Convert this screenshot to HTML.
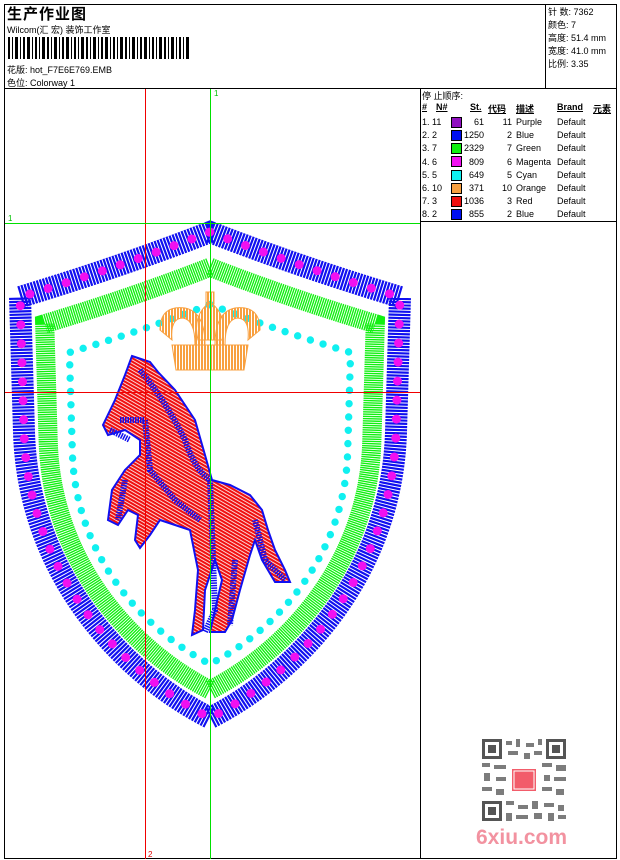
<!DOCTYPE html>
<html><head><meta charset="utf-8"><style>
*{margin:0;padding:0}
body{width:620px;height:860px;background:#fff;position:relative;overflow:hidden;font-family:"Liberation Sans","Noto Sans CJK SC",sans-serif;font-size:9px;color:#000}
.a{position:absolute;white-space:nowrap}
.ln{position:absolute;background:#000}
</style></head><body>
<div class="ln" style="left:4px;top:4px;width:613px;height:1px"></div>
<div class="ln" style="left:4px;top:4px;width:1px;height:855px"></div>
<div class="ln" style="left:616px;top:4px;width:1px;height:855px"></div>
<div class="ln" style="left:4px;top:858px;width:613px;height:1px"></div>
<div class="ln" style="left:4px;top:88px;width:613px;height:1px"></div>
<div class="ln" style="left:545px;top:4px;width:1px;height:84px"></div>
<div class="ln" style="left:420px;top:88px;width:1px;height:771px"></div>
<div class="ln" style="left:420px;top:221px;width:197px;height:1px"></div>

<div class="a" style="left:7px;top:3px;font-size:15px;font-weight:bold;letter-spacing:1px">生产作业图</div>
<div class="a" style="left:7px;top:23px">Wilcom(汇 宏) 装饰工作室</div>
<svg class="a" style="left:8px;top:37px" width="184" height="22">
<g fill="#000">
<rect x="0" y="0" width="2" height="22"/><rect x="4" y="0" width="1" height="22"/><rect x="7" y="0" width="3" height="22"/><rect x="12" y="0" width="1" height="22"/><rect x="15" y="0" width="2" height="22"/><rect x="19" y="0" width="3" height="22"/><rect x="24" y="0" width="1" height="22"/><rect x="27" y="0" width="2" height="22"/><rect x="31" y="0" width="1" height="22"/><rect x="34" y="0" width="3" height="22"/><rect x="39" y="0" width="2" height="22"/><rect x="43" y="0" width="1" height="22"/><rect x="46" y="0" width="3" height="22"/><rect x="51" y="0" width="1" height="22"/><rect x="54" y="0" width="2" height="22"/><rect x="58" y="0" width="3" height="22"/><rect x="63" y="0" width="1" height="22"/><rect x="66" y="0" width="2" height="22"/><rect x="70" y="0" width="1" height="22"/><rect x="73" y="0" width="3" height="22"/><rect x="78" y="0" width="2" height="22"/><rect x="82" y="0" width="1" height="22"/><rect x="85" y="0" width="3" height="22"/><rect x="90" y="0" width="1" height="22"/><rect x="93" y="0" width="2" height="22"/><rect x="97" y="0" width="3" height="22"/><rect x="102" y="0" width="1" height="22"/><rect x="105" y="0" width="2" height="22"/><rect x="109" y="0" width="1" height="22"/><rect x="112" y="0" width="3" height="22"/><rect x="117" y="0" width="2" height="22"/><rect x="121" y="0" width="1" height="22"/><rect x="124" y="0" width="3" height="22"/><rect x="129" y="0" width="1" height="22"/><rect x="132" y="0" width="2" height="22"/><rect x="136" y="0" width="3" height="22"/><rect x="141" y="0" width="1" height="22"/><rect x="144" y="0" width="2" height="22"/><rect x="148" y="0" width="1" height="22"/><rect x="151" y="0" width="3" height="22"/><rect x="156" y="0" width="2" height="22"/><rect x="160" y="0" width="1" height="22"/><rect x="163" y="0" width="3" height="22"/><rect x="168" y="0" width="1" height="22"/><rect x="171" y="0" width="2" height="22"/><rect x="175" y="0" width="1" height="22"/><rect x="178" y="0" width="3" height="22"/>
</g></svg>
<div class="a" style="left:7px;top:63px">花版: hot_F7E6E769.EMB</div>
<div class="a" style="left:7px;top:76px">色位: Colorway 1</div>

<div class="a" style="left:548px;top:6px;line-height:13px">针 数: 7362<br>颜色: 7<br>高度: 51.4 mm<br>宽度: 41.0 mm<br>比例: 3.35</div>

<div class="a" style="left:422px;top:89px">停 止顺序:</div>
<div class="a" style="left:422px;top:102px;font-weight:bold;text-decoration:underline">#</div>
<div class="a" style="left:436px;top:102px;font-weight:bold;text-decoration:underline">N#</div>
<div class="a" style="left:470px;top:102px;font-weight:bold;text-decoration:underline">St.</div>
<div class="a" style="left:488px;top:102px;font-weight:bold;text-decoration:underline">代码</div>
<div class="a" style="left:516px;top:102px;font-weight:bold;text-decoration:underline">描述</div>
<div class="a" style="left:557px;top:102px;font-weight:bold;text-decoration:underline">Brand</div>
<div class="a" style="left:593px;top:102px;font-weight:bold;text-decoration:underline">元素</div>
<div class="a" style="left:422px;top:116px;line-height:13.2px">1. 11<br>2. 2<br>3. 7<br>4. 6<br>5. 5<br>6. 10<br>7. 3<br>8. 2</div>
<div class="a" style="left:451px;top:116px">
<div style="width:9px;height:9px;background:#9010c0;border:1px solid #000;margin:1px 0 2px"></div>
<div style="width:9px;height:9px;background:#0010f0;border:1px solid #000;margin:0 0 2.2px"></div>
<div style="width:9px;height:9px;background:#10f010;border:1px solid #000;margin:0 0 2.2px"></div>
<div style="width:9px;height:9px;background:#f010f0;border:1px solid #000;margin:0 0 2.2px"></div>
<div style="width:9px;height:9px;background:#10f0f0;border:1px solid #000;margin:0 0 2.2px"></div>
<div style="width:9px;height:9px;background:#f8a040;border:1px solid #000;margin:0 0 2.2px"></div>
<div style="width:9px;height:9px;background:#f01010;border:1px solid #000;margin:0 0 2.2px"></div>
<div style="width:9px;height:9px;background:#0010f0;border:1px solid #000"></div>
</div>
<div class="a" style="left:462px;top:116px;width:22px;text-align:right;line-height:13.2px">61<br>1250<br>2329<br>809<br>649<br>371<br>1036<br>855</div>
<div class="a" style="left:496px;top:116px;width:16px;text-align:right;line-height:13.2px">11<br>2<br>7<br>6<br>5<br>10<br>3<br>2</div>
<div class="a" style="left:516px;top:116px;line-height:13.2px">Purple<br>Blue<br>Green<br>Magenta<br>Cyan<br>Orange<br>Red<br>Blue</div>
<div class="a" style="left:557px;top:116px;line-height:13.2px">Default<br>Default<br>Default<br>Default<br>Default<br>Default<br>Default<br>Default</div>

<svg class="a" style="left:0;top:0" width="420" height="860">
<defs>
<path id="sh" d="M0,-240 Q90,-205 190,-175 L186,-40 C182,100 90,200 0,246 C-90,200 -182,100 -186,-40 L-190,-175 Q-90,-205 0,-240 Z"/>
<pattern id="hr" width="3" height="3" patternUnits="userSpaceOnUse" patternTransform="rotate(30)"><rect width="3" height="2.2" fill="#f01010"/></pattern>
<pattern id="ho" width="3" height="3" patternUnits="userSpaceOnUse"><rect width="2" height="3" fill="#f8a040"/></pattern>
</defs>
<g transform="translate(210,472)">
<use href="#sh" fill="none" stroke="#1010f0" stroke-width="22" stroke-dasharray="2.2 1"/>
<use href="#sh" fill="none" stroke="#f010f0" stroke-width="9" stroke-linecap="round" stroke-dasharray="0 19"/>
<g transform="translate(0,4) scale(0.87)"><use href="#sh" fill="none" stroke="#10f010" stroke-width="22" stroke-dasharray="1.6 1"/></g>
<g transform="translate(0,10) scale(0.74)"><use href="#sh" fill="none" stroke="#10f0f0" stroke-width="10" stroke-linecap="round" stroke-dasharray="0 18"/></g>
</g>
<!-- crown -->
<g fill="url(#ho)" stroke="#f8a040" stroke-width="1">
<path d="M160,330 Q160,305 185,308 Q205,312 205,345 L195,345 Q195,320 183,318 Q170,318 172,340 Z"/>
<path d="M260,330 Q260,305 235,308 Q215,312 215,345 L225,345 Q225,320 237,318 Q250,318 248,340 Z"/>
<path d="M198,340 Q192,315 210,302 Q228,315 222,340 Z"/>
<path d="M172,345 L248,345 L244,370 L176,370 Z"/>
<rect x="206" y="292" width="8" height="12"/>
</g>
<!-- horse -->
<polygon points="132,356 150,362 158,372 175,390 195,420 205,455 212,480 230,485 250,495 262,510 268,530 275,550 285,570 290,582 275,582 262,560 255,540 250,555 240,590 232,620 225,632 210,632 215,610 222,580 215,560 205,590 203,630 192,635 195,610 198,570 190,530 175,525 160,520 150,535 140,548 135,540 138,515 128,510 118,525 108,520 112,490 125,470 140,455 140,440 125,430 108,435 103,425 115,400 125,375" fill="url(#hr)" stroke="#1010f0" stroke-width="2"/>
<g fill="none" stroke="#1010f0" stroke-width="6" stroke-dasharray="1.5 1">
<path d="M140,370 Q165,400 185,440 Q195,470 210,480"/>
<path d="M120,420 L145,420 L150,470 L175,500 L200,520"/>
<path d="M210,480 L215,610 L205,632"/>
<path d="M255,520 L265,560 L285,580"/>
<path d="M125,480 L118,520"/>
<path d="M235,560 L230,625"/>
<path d="M110,430 L130,440"/>
</g>
<!-- guide lines -->
<rect x="145" y="89" width="1" height="770" fill="#f00000"/>
<rect x="210" y="89" width="1" height="770" fill="#00e000"/>
<rect x="5" y="223" width="415" height="1" fill="#00e000"/>
<rect x="5" y="392" width="415" height="1" fill="#f00000"/>
<text x="214" y="96" font-size="8" fill="#00c000" font-family="Liberation Sans">1</text>
<text x="8" y="221" font-size="8" fill="#00c000" font-family="Liberation Sans">1</text>
<text x="148" y="857" font-size="8" fill="#e00000" font-family="Liberation Sans">2</text>
</svg>

<!-- QR -->
<svg class="a" style="left:482px;top:739px" width="84" height="82">
<g fill="#555">
<rect x="0" y="0" width="20" height="20"/><rect x="64" y="0" width="20" height="20"/><rect x="0" y="62" width="20" height="20"/>
</g>
<g fill="#fff"><rect x="3" y="3" width="14" height="14"/><rect x="67" y="3" width="14" height="14"/><rect x="3" y="65" width="14" height="14"/></g>
<g fill="#555"><rect x="6" y="6" width="8" height="8"/><rect x="70" y="6" width="8" height="8"/><rect x="6" y="68" width="8" height="8"/></g>
<g fill="#666" opacity="0.85">
<rect x="24" y="2" width="6" height="4"/><rect x="34" y="0" width="4" height="8"/><rect x="44" y="4" width="8" height="4"/><rect x="56" y="0" width="4" height="6"/><rect x="26" y="12" width="10" height="4"/><rect x="42" y="14" width="6" height="6"/><rect x="52" y="12" width="8" height="4"/>
<rect x="0" y="24" width="8" height="4"/><rect x="12" y="26" width="12" height="4"/><rect x="60" y="24" width="10" height="4"/><rect x="74" y="26" width="10" height="6"/>
<rect x="2" y="34" width="6" height="8"/><rect x="14" y="38" width="10" height="4"/><rect x="62" y="36" width="6" height="6"/><rect x="72" y="38" width="12" height="4"/>
<rect x="0" y="48" width="10" height="4"/><rect x="14" y="50" width="8" height="6"/><rect x="60" y="48" width="10" height="4"/><rect x="74" y="50" width="8" height="6"/>
<rect x="24" y="62" width="8" height="4"/><rect x="36" y="66" width="10" height="4"/><rect x="50" y="62" width="6" height="8"/><rect x="62" y="64" width="10" height="4"/><rect x="76" y="66" width="6" height="6"/>
<rect x="24" y="74" width="6" height="8"/><rect x="34" y="76" width="12" height="4"/><rect x="52" y="74" width="8" height="6"/><rect x="66" y="74" width="6" height="8"/><rect x="76" y="76" width="8" height="4"/>
</g>
<rect x="30" y="30" width="24" height="22" fill="#f04050" opacity="0.85"/>
<rect x="32" y="32" width="20" height="18" fill="none" stroke="#fff" stroke-width="1"/>
</svg>
<div class="a" style="left:476px;top:826px;font-size:21px;font-weight:bold;color:#f08090;opacity:0.85">6xiu.com</div>
</body></html>
